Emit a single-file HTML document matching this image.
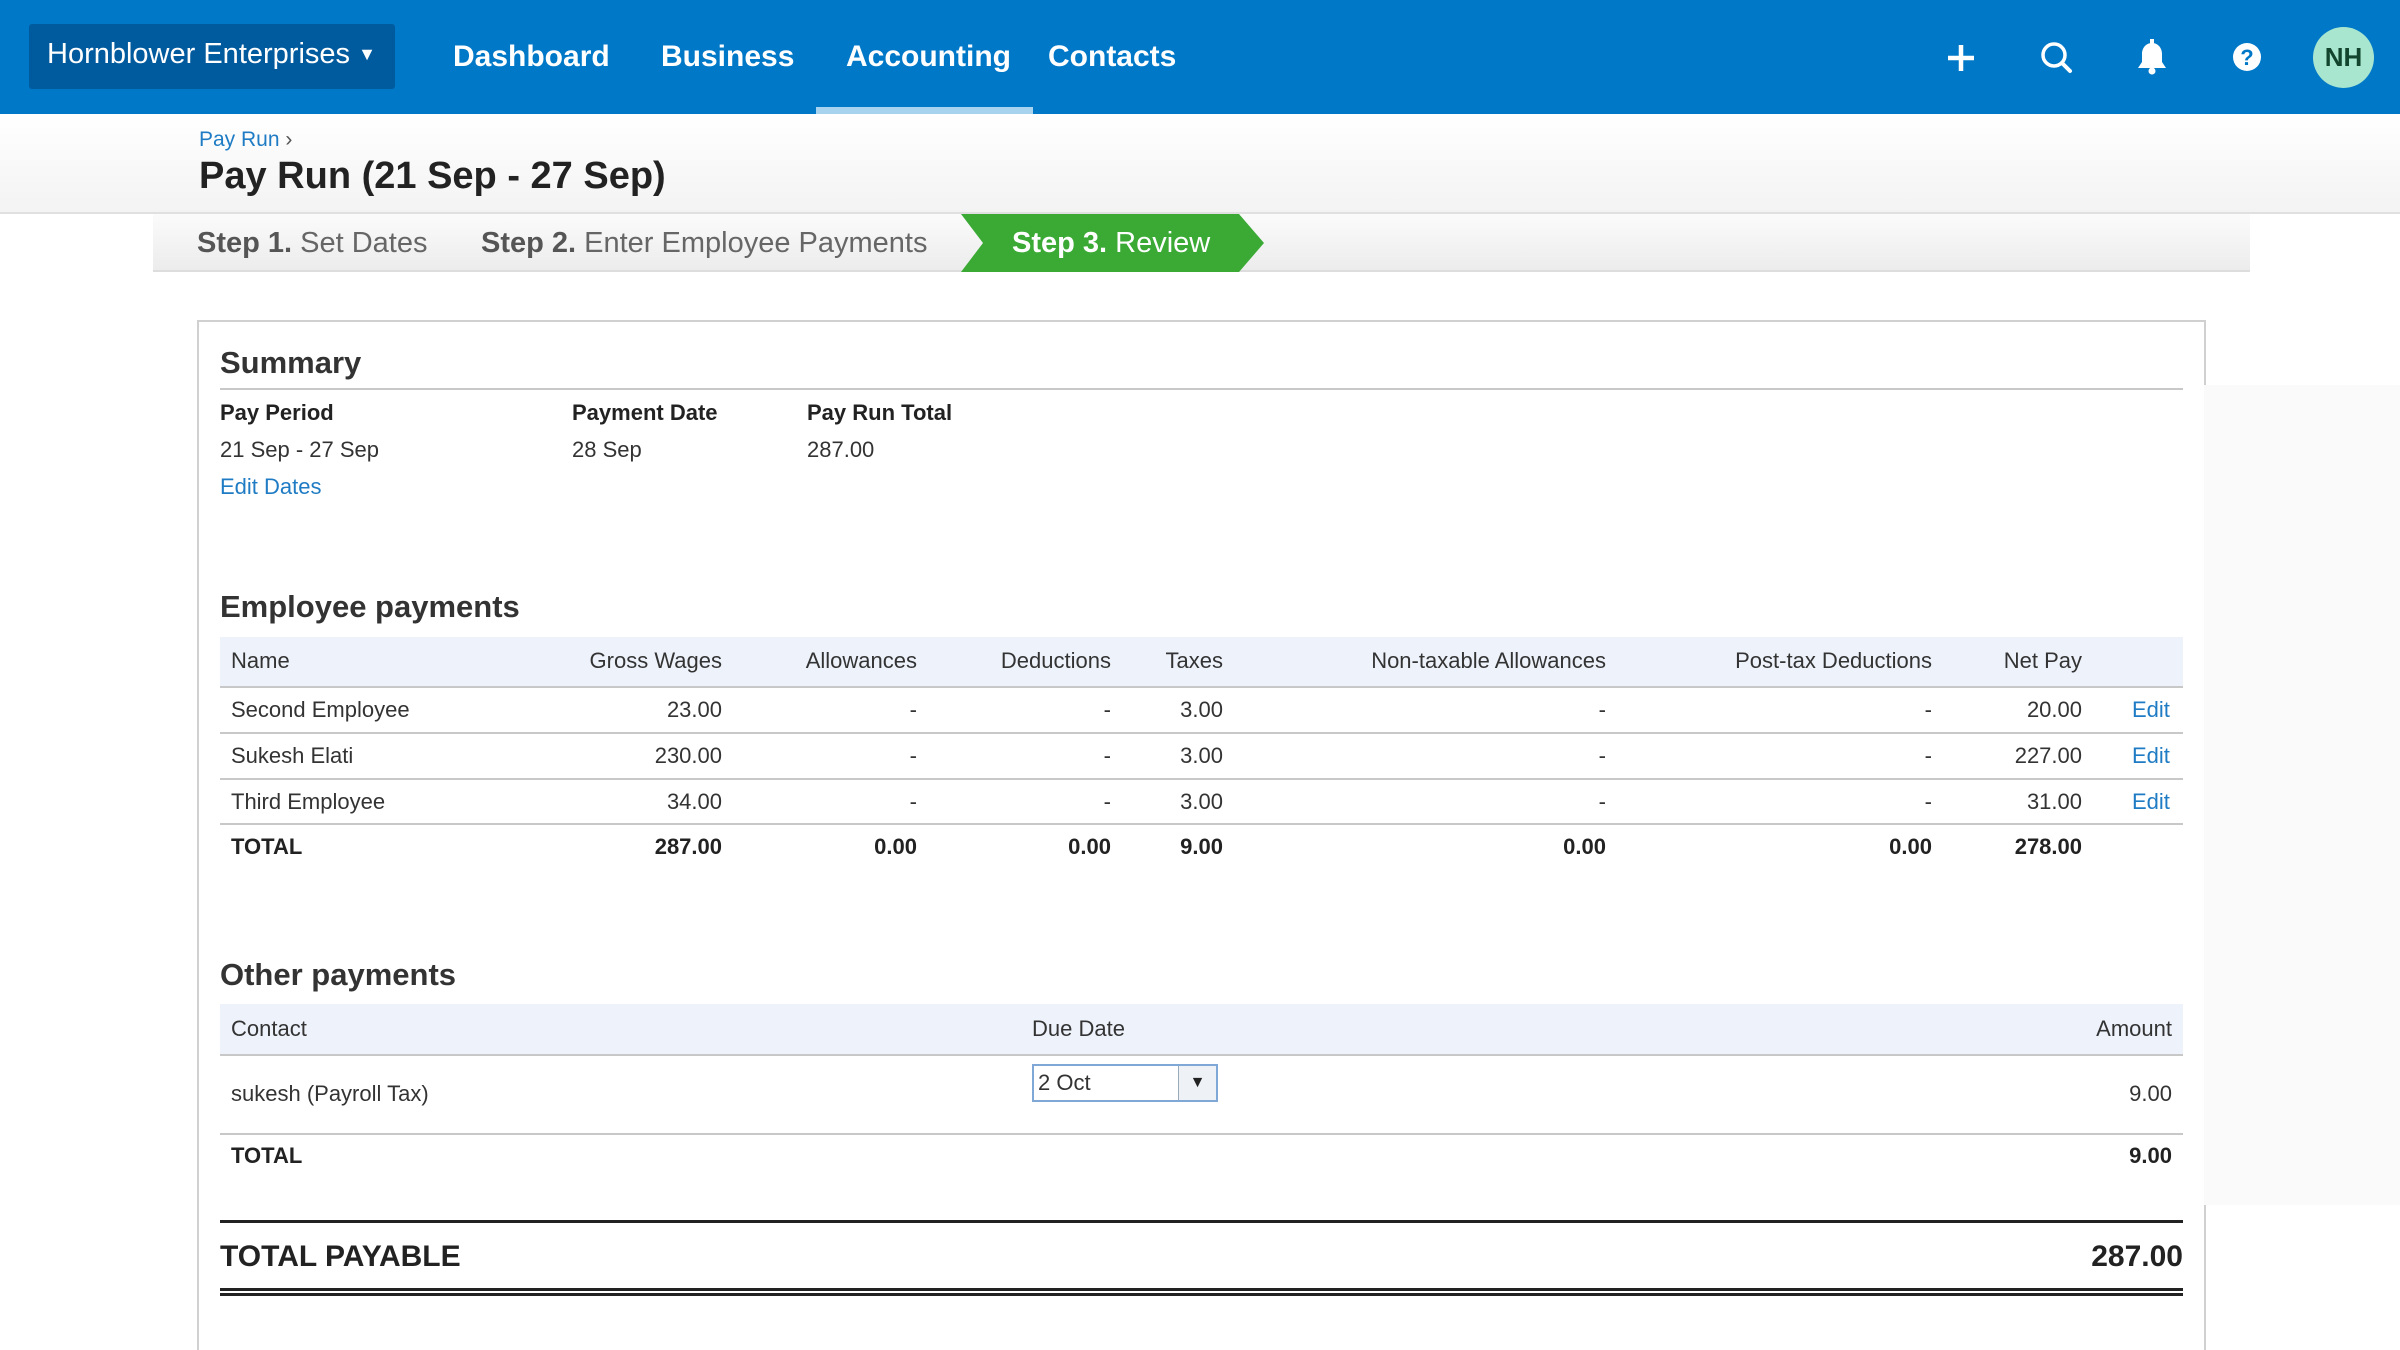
<!DOCTYPE html>
<html><head><meta charset="utf-8"><style>
*{margin:0;padding:0;box-sizing:border-box}
body{width:2400px;height:1350px;overflow:hidden;background:#fff;font-family:"Liberation Sans",Arial,sans-serif;color:#333;position:relative}
.a{position:absolute;white-space:nowrap}
.nav{left:0;top:0;width:2400px;height:114px;background:#0078c8}
.nl{color:#fff;font-weight:bold;font-size:30px;top:40px}
.hdr{left:0;top:114px;width:2400px;height:100px;background:linear-gradient(#fff,#f3f3f3);border-bottom:2px solid #e0e0e0}
.steps{left:153px;top:214px;width:2097px;height:58px;background:linear-gradient(#fbfbfb,#ececec);border-bottom:2px solid #ddd}
.st{top:227px;font-size:29px;color:#666}
.st b{color:#555}
.t{font-size:22px;color:#333;transform:translateY(-50%)}
.h{font-size:31px;font-weight:bold;color:#333}
.b{font-weight:bold;color:#222}
.line{height:2px;background:#c8c8c8}
.band{background:#eef3fb}
.lk{color:#1f7cc4}
</style></head><body>
<div class="a nav"></div>
<div class="a" style="left:29px;top:24px;width:366px;height:65px;background:#005a9e;border-radius:3px"></div>
<div class="a" style="left:47px;top:38px;color:#fff;font-size:29px">Hornblower Enterprises <span style="font-size:18px;position:relative;top:-3px">▼</span></div>
<div class="a nl" style="left:453px">Dashboard</div>
<div class="a nl" style="left:661px">Business</div>
<div class="a nl" style="left:846px">Accounting</div>
<div class="a nl" style="left:1048px">Contacts</div>
<div class="a" style="left:816px;top:107px;width:217px;height:7px;background:#a8d3ee"></div>
<svg class="a" style="left:1940px;top:34px" width="340" height="48" viewBox="0 0 340 48">
<path d="M21 11v26M8 24h26" stroke="#fff" stroke-width="4.5"/>
<circle cx="114" cy="21" r="11" fill="none" stroke="#fff" stroke-width="3.5"/><path d="M122 29l8 8" stroke="#fff" stroke-width="4" stroke-linecap="round"/>
<path d="M212 9c-6 0-10 5-10 11v8l-4 6h28l-4-6v-8c0-6-4-11-10-11z" fill="#fff"/><rect x="210" y="5" width="4" height="5" fill="#fff"/><circle cx="212" cy="37" r="3.5" fill="#fff"/>
<circle cx="307" cy="23" r="14" fill="#fff"/><text x="307" y="31" font-family="Liberation Sans" font-weight="bold" font-size="22" fill="#0078c8" text-anchor="middle">?</text>
</svg>
<div class="a" style="left:2313px;top:27px;width:61px;height:61px;border-radius:50%;background:#a8e6cf;color:#13452e;font-weight:bold;font-size:26px;text-align:center;line-height:61px">NH</div>

<div class="a hdr"></div>
<div class="a lk" style="left:199px;top:128px;font-size:21px">Pay Run <span style="color:#555">›</span></div>
<div class="a" style="left:199px;top:155px;font-size:38px;font-weight:bold;color:#222">Pay Run (21 Sep - 27 Sep)</div>
<div class="a steps"></div>
<div class="a st" style="left:197px"><b>Step 1.</b> Set Dates</div>
<div class="a st" style="left:481px"><b>Step 2.</b> Enter Employee Payments</div>
<svg class="a" style="left:961px;top:214px" width="303" height="58"><polygon points="0,0 278,0 303,29 278,58 0,58 22,29" fill="#3aaa35"/></svg>
<div class="a st" style="left:1012px;color:#fff"><b style="color:#fff">Step 3.</b> Review</div>

<div class="a" style="left:197px;top:320px;width:2009px;height:1030px;border:2px solid #d0d0d0;border-bottom:none"></div>
<div class="a" style="left:2204px;top:385px;width:196px;height:820px;background:#fafafa"></div>
<div class="a h" style="left:220px;top:345px">Summary</div>
<div class="a line" style="left:220px;top:388px;width:1963px"></div>
<div class="a t b" style="left:220px;top:413px">Pay Period</div>
<div class="a t b" style="left:572px;top:413px">Payment Date</div>
<div class="a t b" style="left:807px;top:413px">Pay Run Total</div>
<div class="a t" style="left:220px;top:450px">21 Sep - 27 Sep</div>
<div class="a t" style="left:572px;top:450px">28 Sep</div>
<div class="a t" style="left:807px;top:450px">287.00</div>
<div class="a t lk" style="left:220px;top:487px">Edit Dates</div>

<div class="a h" style="left:220px;top:589px">Employee payments</div>
<div class="a band" style="left:220px;top:637px;width:1963px;height:50px"></div>
<div class="a line" style="left:220px;top:686px;width:1963px"></div>
<div class="a line" style="left:220px;top:732px;width:1963px"></div>
<div class="a line" style="left:220px;top:778px;width:1963px"></div>
<div class="a line" style="left:220px;top:823px;width:1963px"></div>
<div class="a t" style="left:231px;top:661px">Name</div>
<div class="a t" style="right:1678px;top:661px">Gross Wages</div>
<div class="a t" style="right:1483px;top:661px">Allowances</div>
<div class="a t" style="right:1289px;top:661px">Deductions</div>
<div class="a t" style="right:1177px;top:661px">Taxes</div>
<div class="a t" style="right:794px;top:661px">Non-taxable Allowances</div>
<div class="a t" style="right:468px;top:661px">Post-tax Deductions</div>
<div class="a t" style="right:318px;top:661px">Net Pay</div>
<div class="a t" style="left:231px;top:710px">Second Employee</div>
<div class="a t" style="left:231px;top:756px">Sukesh Elati</div>
<div class="a t" style="left:231px;top:802px">Third Employee</div>
<div class="a t b" style="left:231px;top:847px">TOTAL</div>

<div class="a t" style="right:1678px;top:710px">23.00</div><div class="a t" style="right:1678px;top:756px">230.00</div><div class="a t" style="right:1678px;top:802px">34.00</div><div class="a t b" style="right:1678px;top:847px">287.00</div>
<div class="a t" style="right:1483px;top:710px">-</div><div class="a t" style="right:1483px;top:756px">-</div><div class="a t" style="right:1483px;top:802px">-</div><div class="a t b" style="right:1483px;top:847px">0.00</div>
<div class="a t" style="right:1289px;top:710px">-</div><div class="a t" style="right:1289px;top:756px">-</div><div class="a t" style="right:1289px;top:802px">-</div><div class="a t b" style="right:1289px;top:847px">0.00</div>
<div class="a t" style="right:1177px;top:710px">3.00</div><div class="a t" style="right:1177px;top:756px">3.00</div><div class="a t" style="right:1177px;top:802px">3.00</div><div class="a t b" style="right:1177px;top:847px">9.00</div>
<div class="a t" style="right:794px;top:710px">-</div><div class="a t" style="right:794px;top:756px">-</div><div class="a t" style="right:794px;top:802px">-</div><div class="a t b" style="right:794px;top:847px">0.00</div>
<div class="a t" style="right:468px;top:710px">-</div><div class="a t" style="right:468px;top:756px">-</div><div class="a t" style="right:468px;top:802px">-</div><div class="a t b" style="right:468px;top:847px">0.00</div>
<div class="a t" style="right:318px;top:710px">20.00</div><div class="a t" style="right:318px;top:756px">227.00</div><div class="a t" style="right:318px;top:802px">31.00</div><div class="a t b" style="right:318px;top:847px">278.00</div>
<div class="a t lk" style="left:2132px;top:710px">Edit</div><div class="a t lk" style="left:2132px;top:756px">Edit</div><div class="a t lk" style="left:2132px;top:802px">Edit</div>

<div class="a h" style="left:220px;top:957px">Other payments</div>
<div class="a band" style="left:220px;top:1004px;width:1963px;height:50px"></div>
<div class="a line" style="left:220px;top:1054px;width:1963px"></div>
<div class="a t" style="left:231px;top:1029px">Contact</div>
<div class="a t" style="left:1032px;top:1029px">Due Date</div>
<div class="a t" style="right:228px;top:1029px">Amount</div>
<div class="a t" style="left:231px;top:1094px">sukesh (Payroll Tax)</div>
<div class="a" style="left:1032px;top:1064px;width:186px;height:38px;border:2px solid #7fa8d6;background:#fff"></div>
<div class="a" style="left:1038px;top:1070px;font-size:22px">2 Oct</div>
<div class="a" style="left:1178px;top:1066px;width:38px;height:34px;border-left:1px solid #9ab;background:#eef2f7;text-align:center;font-size:16px;line-height:34px;color:#222">▼</div>
<div class="a t" style="right:228px;top:1094px">9.00</div>
<div class="a line" style="left:220px;top:1133px;width:1963px"></div>
<div class="a t b" style="left:231px;top:1156px">TOTAL</div>
<div class="a t b" style="right:228px;top:1156px">9.00</div>

<div class="a" style="left:220px;top:1220px;width:1963px;height:3px;background:#222"></div>
<div class="a b" style="left:220px;top:1240px;font-size:30px">TOTAL PAYABLE</div>
<div class="a b" style="right:217px;top:1240px;font-size:30px">287.00</div>
<div class="a" style="left:220px;top:1288px;width:1963px;height:3px;background:#222"></div>
<div class="a" style="left:220px;top:1293px;width:1963px;height:3px;background:#222"></div>
</body></html>
